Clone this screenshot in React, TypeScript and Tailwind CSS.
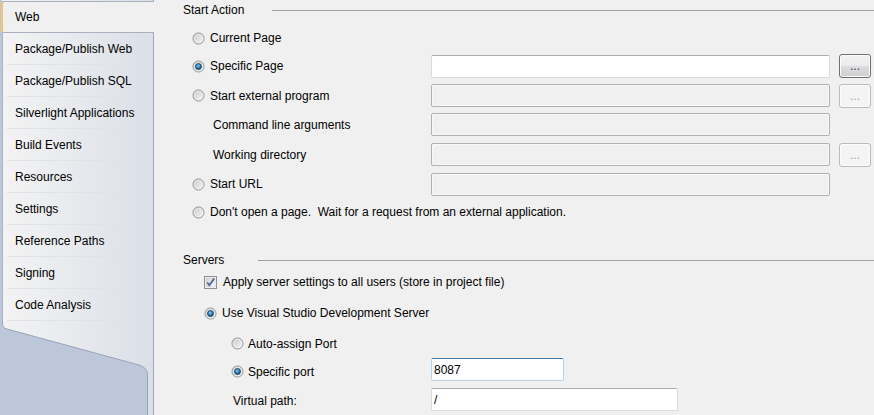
import React from 'react';

const tabs = [
  'Package/Publish Web',
  'Package/Publish SQL',
  'Silverlight Applications',
  'Build Events',
  'Resources',
  'Settings',
  'Reference Paths',
  'Signing',
  'Code Analysis',
];

function Defs() {
  return (
    <svg width="0" height="0" className="block w-0 h-0 shrink-0">
      <defs>
        <linearGradient id="radioFill" x1="0" y1="0" x2="1" y2="1">
          <stop offset="0" stopColor="#c9c9c9" />
          <stop offset="1" stopColor="#f7f7f7" />
        </linearGradient>
        <radialGradient id="radioDot" cx="0.45" cy="0.4" r="0.6">
          <stop offset="0" stopColor="#8fd3f6" />
          <stop offset="0.45" stopColor="#3a8ac4" />
          <stop offset="1" stopColor="#0f3b5c" />
        </radialGradient>
        <linearGradient id="checkFill" x1="0" y1="0" x2="1" y2="1">
          <stop offset="0" stopColor="#d4d4d4" />
          <stop offset="1" stopColor="#fbfbfb" />
        </linearGradient>
        <linearGradient id="panelGrad" gradientUnits="userSpaceOnUse" x1="3" y1="0" x2="153" y2="0">
          <stop offset="0" stopColor="#f3f3f3" />
          <stop offset="1" stopColor="#dbdfe7" />
        </linearGradient>
      </defs>
    </svg>
  );
}

function Radio({ checked }: { checked?: boolean }) {
  return (
    <svg width="13" height="13" viewBox="0 0 13 13" className="shrink-0">
      <circle cx="6.5" cy="6.5" r="5.5" fill="url(#radioFill)" stroke="#8c8f90" strokeWidth="1" />
      <circle cx="6.5" cy="6.5" r="4.4" fill="none" stroke="#ffffff" strokeOpacity="0.6" strokeWidth="0.8" />
      {checked && <circle cx="6.5" cy="6.5" r="3.1" fill="url(#radioDot)" stroke="#1d4563" strokeWidth="0.7" />}
    </svg>
  );
}

function CheckBox() {
  return (
    <svg width="13" height="13" viewBox="0 0 13 13" className="shrink-0">
      <rect x="0.5" y="0.5" width="12" height="12" fill="#fff" stroke="#8e8f8f" />
      <rect x="2" y="2" width="9" height="9" fill="url(#checkFill)" stroke="#bcbcbc" strokeWidth="0.6" />
      <path d="M3.2 6.4 L5.4 9.3 L10.2 2.6" fill="none" stroke="#4a5f97" strokeWidth="1.7" />
    </svg>
  );
}

function TextBox({ w, value, kind }: { w: string; value?: string; kind: 'on' | 'off' | 'focus' }) {
  const look =
    kind === 'off'
      ? 'border-[#b1b1b1] bg-[#f0f0f0] shadow-[inset_0_0_0_1px_#f8f8f8]'
      : kind === 'focus'
        ? 'border-[#b7d3ec] border-t-[#3d7bad] bg-white'
        : 'border-[#d6dae2] border-t-[#abadb3] bg-white';
  return (
    <div className={`${w} h-[23px] shrink-0 rounded-[2px] border ${look} flex items-center pl-[2px] text-[12px] text-black`}>
      {value}
    </div>
  );
}

function Browse({ disabled }: { disabled?: boolean }) {
  return disabled ? (
    <div className="ml-[9px] w-[32px] h-[24px] shrink-0 rounded-[3px] border border-[#b9bcbf] bg-[#f4f4f4] shadow-[inset_0_0_0_1px_#fcfcfc] flex items-center justify-center text-[12px] leading-none text-[#a6a6a6]">
      ...
    </div>
  ) : (
    <div className="ml-[9px] w-[32px] h-[24px] shrink-0 rounded-[3px] border border-[#707070] bg-[linear-gradient(#f2f2f2_0%,#ebebeb_50%,#dddddd_50%,#cfcfcf_100%)] shadow-[inset_0_0_0_1px_#fcfcfc] flex items-center justify-center text-[12px] leading-none text-[#1d3660]">
      ...
    </div>
  );
}

function Header({ title, gap }: { title: string; gap: string }) {
  return (
    <div className="h-[20px] flex items-center pl-[29px]">
      <span className="text-[12px] leading-[15px] text-black">{title}</span>
      <div className={`${gap} flex-1 h-px bg-[#a0a0a0]`} />
    </div>
  );
}

function Sidebar() {
  return (
    <aside className="w-[154px] h-[415px] shrink-0 bg-[#bcc8d9] flex flex-col">
      <div className="h-px ml-[2px] bg-gradient-to-r from-[#f3f3f3] to-[#dbdfe7] border-r border-[#9ea7b5]" />
      <div className="h-[32px] ml-px rounded-l-[3px] border-y border-[#a9b1be] border-l-2 border-l-[#f4c46a] bg-[#f0f0f0] flex items-center pl-[12px] text-[12px] text-black">
        Web
      </div>
      <div className="ml-[2px] border-l border-r border-l-[#aab4c3] border-r-[#9ea7b5] bg-gradient-to-r from-[#f3f3f3] to-[#dbdfe7]">
        {tabs.map(t => (
          <div key={t} className="h-[32px] flex flex-col">
            <div className="flex-1 flex items-center pl-[12px] text-[12px] text-black">{t}</div>
            <div className="ml-[4px] w-[128px] h-px bg-[#e0e2e7]" />
          </div>
        ))}
      </div>
      <svg width="154" height="94" viewBox="0 0 154 94" className="block shrink-0">
        <rect x="2" y="0" width="152" height="94" fill="url(#panelGrad)" />
        <line x1="153.5" y1="0" x2="153.5" y2="94" stroke="#9ea7b5" />
        <path d="M0 0 L2.5 0 L2.5 3 Q2.5 7 7 8 L139 44 Q147.5 46.5 147.5 54 L147.5 94 L0 94 Z" fill="#bcc8d9" />
        <path d="M2.5 0 L2.5 3 Q2.5 7 7 8 L139 44 Q147.5 46.5 147.5 54 L147.5 94" fill="none" stroke="#98a4b6" />
      </svg>
    </aside>
  );
}

export default function App() {
  return (
    <div className="flex w-[874px] h-[415px] overflow-hidden bg-[#f0f0f0] font-['Liberation_Sans',Arial,sans-serif] text-[12px] text-black">
      <Defs />
      <Sidebar />
      <main className="flex-1 flex flex-col">
        <Header title="Start Action" gap="ml-[28px]" />

        <div className="mt-[4px] h-[28px] flex items-center pl-[38px]">
          <Radio />
          <span className="ml-[5px]">Current Page</span>
        </div>
        <div className="h-[28px] flex items-center">
          <div className="w-[277px] shrink-0 flex items-center pl-[38px]">
            <Radio checked />
            <span className="ml-[5px]">Specific Page</span>
          </div>
          <TextBox w="w-[399px]" kind="on" />
          <Browse />
        </div>
        <div className="h-[31px] flex items-center">
          <div className="w-[277px] shrink-0 flex items-center pl-[38px]">
            <Radio />
            <span className="ml-[5px]">Start external program</span>
          </div>
          <TextBox w="w-[399px]" kind="off" />
          <Browse disabled />
        </div>
        <div className="h-[27px] flex items-center">
          <div className="w-[277px] shrink-0 pl-[59px]">Command line arguments</div>
          <TextBox w="w-[399px]" kind="off" />
        </div>
        <div className="h-[33px] flex items-center">
          <div className="w-[277px] shrink-0 pl-[59px]">Working directory</div>
          <TextBox w="w-[399px]" kind="off" />
          <Browse disabled />
        </div>
        <div className="h-[26px] flex items-center">
          <div className="w-[277px] shrink-0 flex items-center pl-[38px]">
            <Radio />
            <span className="ml-[5px]">Start URL</span>
          </div>
          <TextBox w="w-[399px]" kind="off" />
        </div>
        <div className="h-[30px] flex items-center pl-[38px]">
          <Radio />
          <span className="ml-[5px] whitespace-pre">Don't open a page.  Wait for a request from an external application.</span>
        </div>

        <div className="mt-[23px]">
          <Header title="Servers" gap="ml-[34px]" />
        </div>
        <div className="h-[24px] flex items-center pl-[50px]">
          <CheckBox />
          <span className="ml-[6px]">Apply server settings to all users (store in project file)</span>
        </div>
        <div className="h-[38px] flex items-center pl-[50px]">
          <Radio checked />
          <span className="ml-[5px]">Use Visual Studio Development Server</span>
        </div>
        <div className="h-[23px] flex items-center pl-[77px]">
          <Radio />
          <span className="ml-[4px]">Auto-assign Port</span>
        </div>
        <div className="h-[29px] flex items-center">
          <div className="w-[277px] shrink-0 self-stretch flex items-center pl-[77px] pt-[4px]">
            <Radio checked />
            <span className="ml-[4px]">Specific port</span>
          </div>
          <TextBox w="w-[133px]" kind="focus" value="8087" />
        </div>
        <div className="h-[31px] flex items-center">
          <div className="w-[277px] shrink-0 self-stretch flex items-center pl-[79px] pt-[3px]">Virtual path:</div>
          <TextBox w="w-[247px]" kind="on" value="/" />
        </div>
      </main>
    </div>
  );
}
